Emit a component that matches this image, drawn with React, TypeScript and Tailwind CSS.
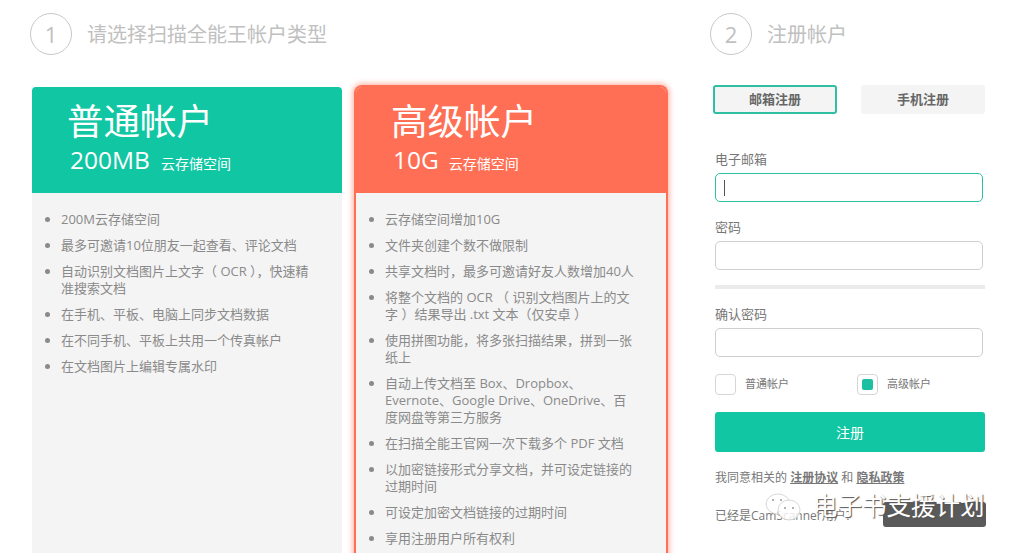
import React from "react";

const font = { fontFamily: '"Open Sans", "Noto Sans CJK SC", sans-serif' };

const basicItems = [
  "200M云存储空间",
  "最多可邀请10位朋友一起查看、评论文档",
  "自动识别文档图片上文字（ OCR ），快速精准搜索文档",
  "在手机、平板、电脑上同步文档数据",
  "在不同手机、平板上共用一个传真帐户",
  "在文档图片上编辑专属水印",
];

const proItems = [
  "云存储空间增加10G",
  "文件夹创建个数不做限制",
  "共享文档时，最多可邀请好友人数增加40人",
  "将整个文档的 OCR （ 识别文档图片上的文字 ）结果导出 .txt 文本（仅安卓 ）",
  "使用拼图功能，将多张扫描结果，拼到一张纸上",
  "自动上传文档至 Box、Dropbox、Evernote、Google Drive、OneDrive、百度网盘等第三方服务",
  "在扫描全能王官网一次下载多个 PDF 文档",
  "以加密链接形式分享文档，并可设定链接的过期时间",
  "可设定加密文档链接的过期时间",
  "享用注册用户所有权利",
];

function StepTitle({ n, title }: { n: number; title: string }) {
  return (
    <div className="flex items-center gap-[15px]">
      <div className="w-[42px] h-[42px] rounded-full border border-[#c8c8c8] flex items-center justify-center text-[22px] text-[#c0c0c0]">
        {n}
      </div>
      <div className="text-[20px] pt-[1px] text-[#c0c0c0]">{title}</div>
    </div>
  );
}

function FeatureList({ items }: { items: string[] }) {
  return (
    <ul className="list-disc pl-[29px] pr-[30px] pt-[18px] text-[13px] leading-[17px] text-[#8a8a8a] marker:text-[#8a8a8a]">
      {items.map((item) => (
        <li key={item} className="mb-[9px]">
          {item}
        </li>
      ))}
    </ul>
  );
}

function Field({ label, active }: { label: string; active?: boolean }) {
  return (
    <div>
      <div className="text-[13px] leading-[18px] text-[#777] mb-[5px]">{label}</div>
      <div
        className={
          active
            ? "w-[268px] h-[29px] rounded-[5px] border border-[#2fbfa3] flex items-center pl-[8px]"
            : "w-[268px] h-[29px] rounded-[5px] border border-[#cfcfcf]"
        }
      >
        {active && <div className="w-px h-[16px] bg-[#555]" />}
      </div>
    </div>
  );
}

export default function App() {
  return (
    <div className="relative w-[1018px] h-[553px] overflow-hidden bg-white flex" style={font}>
      <div className="w-[710px] pl-[30px] pt-[13px] shrink-0">
        <StepTitle n={1} title="请选择扫描全能王帐户类型" />
        <div className="flex mt-[32px] ml-[2px] gap-[12px]">
          <div className="w-[310px] h-[480px] rounded-t-[4px] overflow-hidden bg-[#f4f4f4]">
            <div className="h-[106px] bg-[#11c6a3] text-white pl-[35px] pt-[12px]">
              <div className="text-[36.5px] leading-[45px]">普通帐户</div>
              <div className="flex items-baseline gap-[11px] pl-[3px]">
                <span className="text-[24.5px] leading-[32px]">200MB</span>
                <span className="text-[14px]">云存储空间</span>
              </div>
            </div>
            <FeatureList items={basicItems} />
          </div>
          <div className="w-[314px] h-[480px] -mt-[2px] rounded-t-[8px] overflow-hidden border-x-2 border-t-2 border-[#ff6f55] bg-[#f4f4f4] shadow-[0_0_5px_2px_rgba(255,111,85,0.45)]">
            <div className="h-[106px] bg-[#ff6f55] text-white pl-[35px] pt-[12px]">
              <div className="text-[36.5px] leading-[45px]">高级帐户</div>
              <div className="flex items-baseline gap-[10px] pl-[2px]">
                <span className="text-[24.5px] leading-[32px]">10G</span>
                <span className="text-[14px]">云存储空间</span>
              </div>
            </div>
            <FeatureList items={proItems} />
          </div>
        </div>
      </div>

      <div className="flex-1 pt-[13px]">
        <StepTitle n={2} title="注册帐户" />
        <div className="pl-[5px]">
          <div className="flex gap-[24px] mt-[30px] -ml-[2px] text-[13px] font-bold text-[#666]">
            <div className="w-[124px] h-[29px] rounded-[3px] border-2 border-[#2fbfa3] bg-[#f4f4f4] flex items-center justify-center">
              邮箱注册
            </div>
            <div className="w-[124px] h-[29px] rounded-[3px] bg-[#f4f4f4] flex items-center justify-center">
              手机注册
            </div>
          </div>
          <div className="mt-[36px] flex flex-col gap-[16px]">
            <Field label="电子邮箱" active />
            <Field label="密码" />
          </div>
          <div className="w-[270px] h-[4px] bg-[#ebebeb] mt-[15px] mb-[16px]" />
          <Field label="确认密码" />
          <div className="flex items-center mt-[17px] text-[11px] text-[#777]">
            <div className="w-[21px] h-[21px] rounded-[4px] border border-[#d5d5d5] mr-[9px]" />
            <span className="w-[112px]">普通帐户</span>
            <div className="w-[21px] h-[21px] rounded-[4px] border border-[#d5d5d5] mr-[9px] flex items-center justify-center">
              <div className="w-[11px] h-[11px] rounded-[2px] bg-[#1cbfa1]" />
            </div>
            <span>高级帐户</span>
          </div>
          <div className="w-[270px] h-[40px] mt-[17px] rounded-[3px] bg-[#11c6a3] text-white text-[14px] flex items-center justify-center">
            注册
          </div>
          <div className="mt-[18px] text-[12px] leading-[16px] text-[#777]">
            我同意相关的 <span className="font-bold underline">注册协议</span> 和{" "}
            <span className="font-bold underline">隐私政策</span>
          </div>
          <div className="mt-[22px] text-[12px] leading-[16px] text-[#777]">已经是CamScanner用户?</div>
        </div>
      </div>

      {/* WeChat watermark over the form */}
      <div className="absolute left-[764px] top-[493px] w-[222px] h-[34px]">
        <svg className="absolute left-0 top-0" width="40" height="32" viewBox="0 0 40 32" fill="none" stroke="#d8d8d8" strokeWidth="1">
          <ellipse cx="14" cy="11" rx="12" ry="10" fill="#ffffff" fillOpacity="0.6" />
          <ellipse cx="25" cy="17" rx="11" ry="10" fill="#ffffff" fillOpacity="0.8" />
          <circle cx="9" cy="7" r="1" fill="#999" stroke="none" />
          <circle cx="17" cy="7" r="1" fill="#999" stroke="none" />
          <circle cx="21" cy="15" r="1" fill="#999" stroke="none" />
          <circle cx="29" cy="15" r="1" fill="#999" stroke="none" />
        </svg>
        <div className="absolute right-0 top-[9px] w-[103px] h-[25px] rounded-[3px] bg-[#5a5a5a]" />
        <div className="absolute left-[49px] top-[-2px] text-[24.5px] leading-[30px] text-white whitespace-nowrap [text-shadow:1px_1px_1px_#555]">
          电子书支援计划
        </div>
      </div>
    </div>
  );
}
